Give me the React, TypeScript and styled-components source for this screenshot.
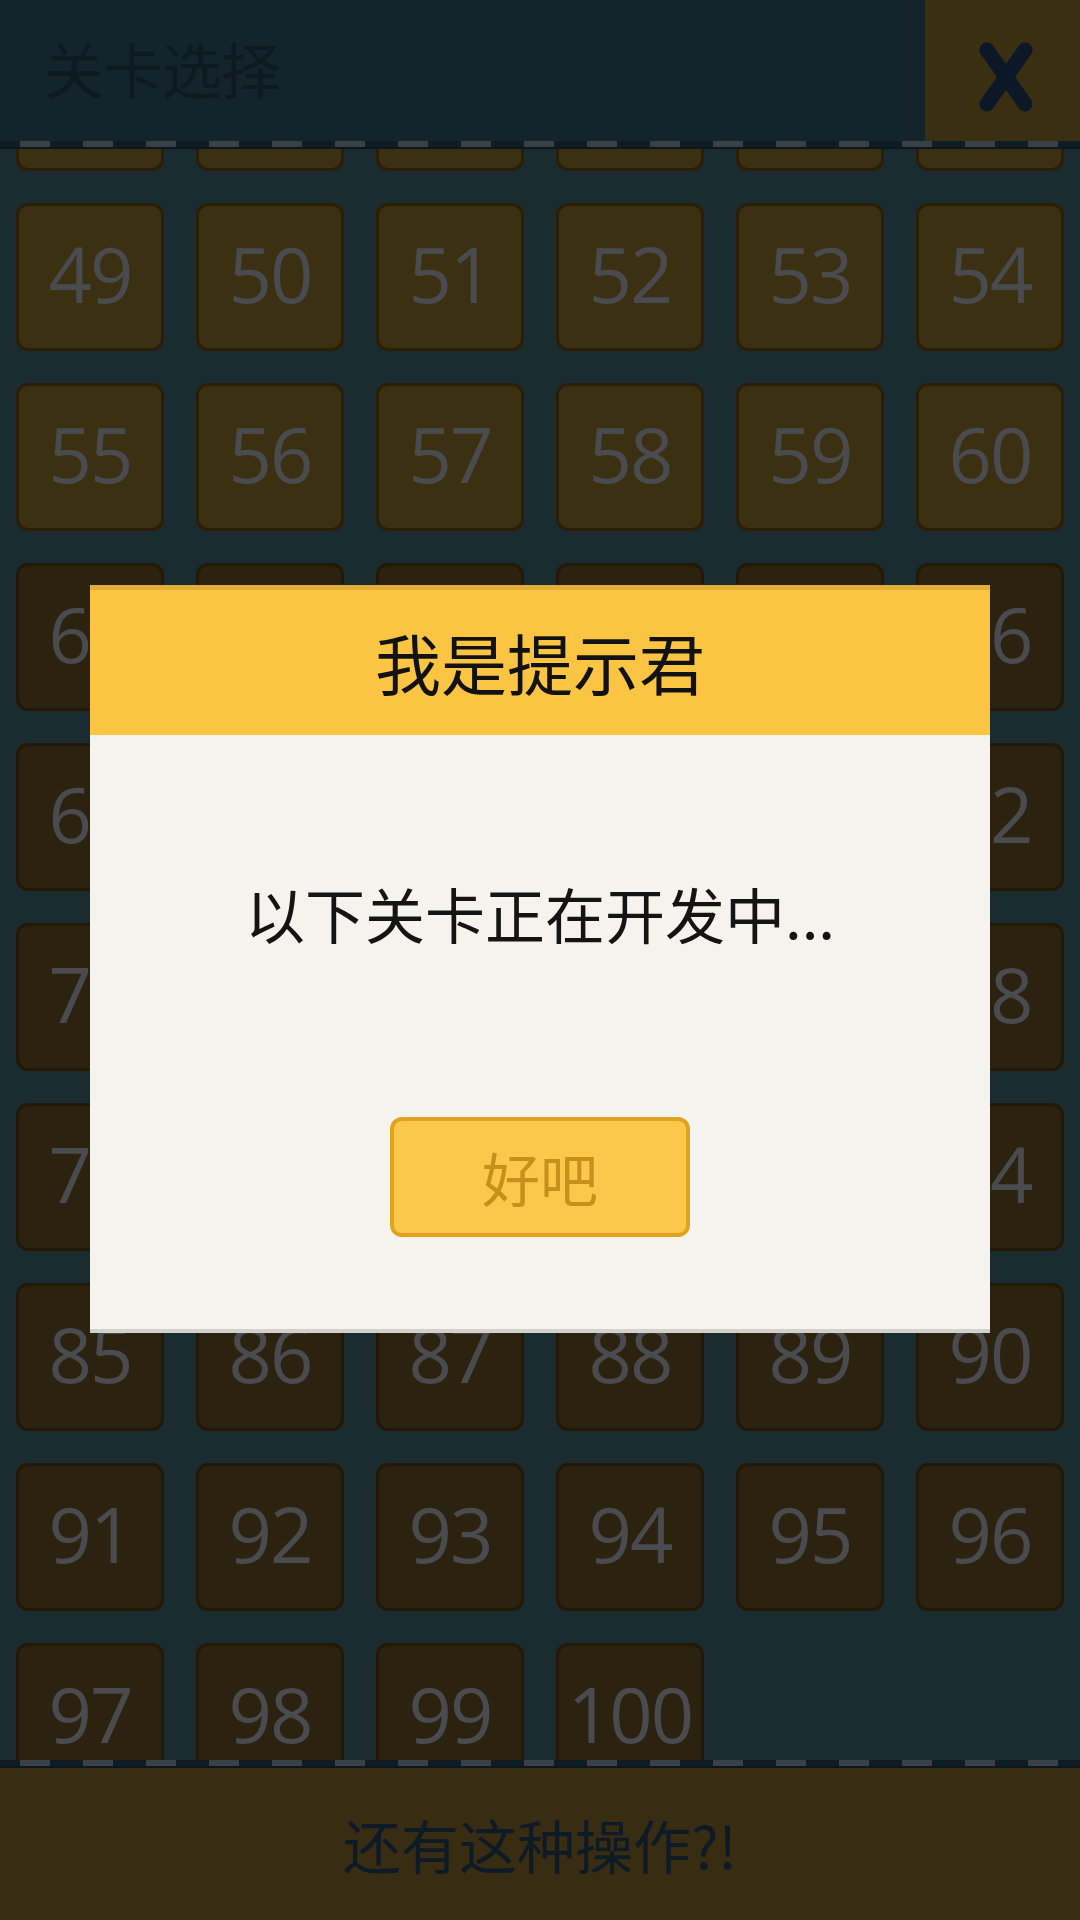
import React, { useLayoutEffect, useRef } from "react";
import styled, { createGlobalStyle } from "styled-components";

const GlobalStyle = createGlobalStyle`
  html, body {
    margin: 0;
    padding: 0;
    background: #1a2c30;
  }
  * { box-sizing: border-box; }
`;

const CJK = `"Noto Sans CJK SC", "Noto Sans", sans-serif`;

const Page = styled.div`
  position: relative;
  width: 1080px;
  height: 1920px;
  display: flex;
  flex-direction: column;
  overflow: hidden;
  background: #1a2c30;
  font-family: ${CJK};
`;

const Header = styled.header`
  height: 141px;
  flex: none;
  display: flex;
  align-items: stretch;
  background: #13252a;
`;

const Title = styled.h1`
  flex: 1;
  margin: 0;
  padding: 0 0 6px 44px;
  display: flex;
  align-items: center;
  font-family: ${CJK};
  font-weight: 400;
  font-size: 60px;
  color: #0d1a1f;
  letter-spacing: -1px;
`;

const CloseButton = styled.button`
  width: 155px;
  border: none;
  padding: 12px 0 0 6px;
  background: #3a2f10;
  display: flex;
  align-items: center;
  justify-content: center;
  cursor: pointer;
`;

const DashedEdge = styled.div`
  height: 8px;
  flex: none;
  background: repeating-linear-gradient(
    90deg,
    #0e1d24 0px,
    #0e1d24 20px,
    #394146 20px,
    #394146 50px,
    #0e1d24 50px,
    #0e1d24 63px
  );
  border-bottom: 2px solid #0b171c;
`;

const ScrollArea = styled.div`
  flex: 1;
  overflow-y: auto;
  scrollbar-width: none;
  &::-webkit-scrollbar { display: none; }
`;

const LevelGrid = styled.div`
  display: grid;
  grid-template-columns: repeat(6, 148px);
  grid-auto-rows: 148px;
  gap: 32px;
  padding: 16px;
`;

const Tile = styled.div<{ $open: boolean }>`
  display: flex;
  align-items: center;
  justify-content: center;
  padding-bottom: 7px;
  border-radius: 12px;
  border: 3px solid ${(p) => (p.$open ? "#2c1e06" : "#231805")};
  background: ${(p) => (p.$open ? "#3b3012" : "#2c2210")};
  font-family: "Open Sans", "Noto Sans", sans-serif;
  font-size: 76px;
  color: #4a4b4f;
  letter-spacing: -2px;
`;

const Footer = styled.footer`
  height: 152px;
  flex: none;
  display: flex;
  align-items: center;
  justify-content: center;
  background: #382d12;
  font-family: ${CJK};
  font-size: 58px;
  color: #0f1a27;
`;

/* modal layer */
const Overlay = styled.div`
  position: absolute;
  inset: 0;
`;

const Dialog = styled.div`
  position: absolute;
  left: 90px;
  top: 585px;
  width: 900px;
  display: flex;
  flex-direction: column;
`;

const DialogHead = styled.div`
  height: 150px;
  border-top: 5px solid #e3ad3a;
  background: #fbc543;
  display: flex;
  align-items: center;
  justify-content: center;
  padding-bottom: 4px;
  font-family: ${CJK};
  font-size: 66px;
  color: #121212;
`;

const DialogBody = styled.div`
  background: #f4f3ed;
  padding: 142px 0 92px;
  border-bottom: 4px solid #d2d1cb;
  display: flex;
  flex-direction: column;
  align-items: center;
  gap: 168px;
`;

const Message = styled.p`
  margin: 0;
  height: 72px;
  line-height: 72px;
  font-family: ${CJK};
  font-size: 60px;
  color: #141414;
`;

const OkButton = styled.button`
  width: 300px;
  height: 120px;
  border-radius: 12px;
  border: 4px solid #e1a21c;
  background: #fbc84c;
  font-family: ${CJK};
  font-size: 58px;
  color: #c8901a;
  display: flex;
  align-items: center;
  justify-content: center;
  padding: 0;
  cursor: pointer;
`;

const CloseIcon = () => (
  <svg width="56" height="72" viewBox="0 0 56 72" aria-hidden="true">
    <g stroke="#0c1828" strokeWidth="15" strokeLinecap="round">
      <line x1="9" y1="9" x2="47" y2="63" />
      <line x1="47" y1="9" x2="9" y2="63" />
    </g>
  </svg>
);

const levels = Array.from({ length: 100 }, (_, i) => i + 1);

export default function App() {
  const scrollRef = useRef<HTMLDivElement>(null);

  useLayoutEffect(() => {
    if (scrollRef.current) scrollRef.current.scrollTop = 1402;
  }, []);

  return (
    <>
      <GlobalStyle />
      <Page>
        <Header>
          <Title>关卡选择</Title>
          <CloseButton aria-label="close">
            <CloseIcon />
          </CloseButton>
        </Header>
        <DashedEdge />
        <ScrollArea ref={scrollRef}>
          <LevelGrid>
            {levels.map((n) => (
              <Tile key={n} $open={n <= 60}>
                {n}
              </Tile>
            ))}
          </LevelGrid>
        </ScrollArea>
        <DashedEdge />
        <Footer>还有这种操作?!</Footer>

        <Overlay>
          <Dialog>
            <DialogHead>我是提示君</DialogHead>
            <DialogBody>
              <Message>以下关卡正在开发中...</Message>
              <OkButton>好吧</OkButton>
            </DialogBody>
          </Dialog>
        </Overlay>
      </Page>
    </>
  );
}
